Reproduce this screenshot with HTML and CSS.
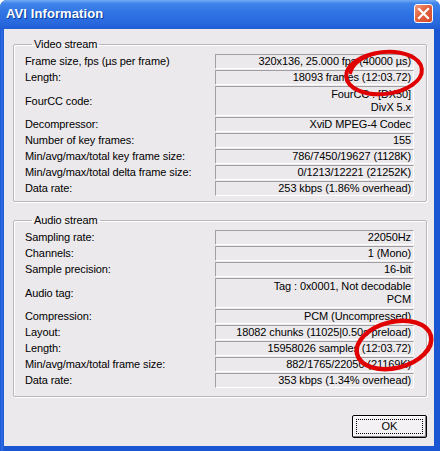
FILE: index.html
```html
<!DOCTYPE html>
<html>
<head>
<meta charset="utf-8">
<link rel="stylesheet" href="styles.css">
</head>
<body>
<div class="window">
  <div class="titlebar">
    <span class="title">AVI Information</span>
    <span class="close"><svg width="13" height="13" viewBox="0 0 13 13"><path d="M2 2 L11 11 M11 2 L2 11" stroke="#fff" stroke-width="2.2" stroke-linecap="square"/></svg></span>
  </div>
  <div class="frame">
    <div class="client">
      <fieldset class="group">
        <legend>Video stream</legend>
        <div class="rows">
          <div class="label">Frame size, fps (µs per frame)</div><div class="val">320x136, 25.000 fps (40000 µs)</div>
          <div class="label">Length:</div><div class="val">18093 frames (12:03.72)</div>
          <div class="label">FourCC code:</div><div class="val two">FourCC : [DX50]<br>DivX 5.x</div>
          <div class="label">Decompressor:</div><div class="val">XviD MPEG-4 Codec</div>
          <div class="label">Number of key frames:</div><div class="val">155</div>
          <div class="label">Min/avg/max/total key frame size:</div><div class="val">786/7450/19627 (1128K)</div>
          <div class="label">Min/avg/max/total delta frame size:</div><div class="val">0/1213/12221 (21252K)</div>
          <div class="label">Data rate:</div><div class="val">253 kbps (1.86% overhead)</div>
        </div>
      </fieldset>
      <fieldset class="group audio">
        <legend>Audio stream</legend>
        <div class="rows">
          <div class="label">Sampling rate:</div><div class="val">22050Hz</div>
          <div class="label">Channels:</div><div class="val">1 (Mono)</div>
          <div class="label">Sample precision:</div><div class="val">16-bit</div>
          <div class="label">Audio tag:</div><div class="val two">Tag : 0x0001, Not decodable<br>PCM</div>
          <div class="label">Compression:</div><div class="val">PCM (Uncompressed)</div>
          <div class="label">Layout:</div><div class="val">18082 chunks (11025|0.50s preload)</div>
          <div class="label">Length:</div><div class="val">15958026 samples (12:03.72)</div>
          <div class="label">Min/avg/max/total frame size:</div><div class="val">882/1765/22050 (21169K)</div>
          <div class="label">Data rate:</div><div class="val">353 kbps (1.34% overhead)</div>
        </div>
      </fieldset>
      <div class="buttons"><button class="ok"><span class="focus">OK</span></button></div>
    </div>
  </div>
  <svg class="marks" width="440" height="451" viewBox="0 0 440 451">
    <ellipse cx="384" cy="73" rx="38" ry="21" transform="rotate(-6 384 73)" fill="none" stroke="#e00000" stroke-width="4"/>
    <path d="M350 74 Q354 58 378 53" fill="none" stroke="#e00000" stroke-width="3.5"/>
    <ellipse cx="394" cy="345" rx="38" ry="23" transform="rotate(-14 394 345)" fill="none" stroke="#e00000" stroke-width="4.5"/>
  </svg>
</div>
</body>
</html>
```

FILE: styles.css
```css
* { box-sizing: border-box; }
html, body { margin: 0; padding: 0; }
body {
  width: 440px;
  height: 451px;
  overflow: hidden;
  background: #ffffff;
  font-family: "Liberation Sans", Arial, sans-serif;
}
.window {
  position: relative;
  width: 440px;
  height: 451px;
  display: flex;
  flex-direction: column;
  background: #1e5bd6;
  border-radius: 7px 7px 0 0;
  overflow: hidden;
}
.titlebar {
  height: 29px;
  flex: none;
  display: flex;
  align-items: center;
  justify-content: space-between;
  padding: 0 7px 2px 6px;
  background: linear-gradient(to bottom, #74acf4 0%, #3f84ea 12%, #2f73e4 45%, #2869de 80%, #1f5cd2 100%);
}
.title {
  color: #fff;
  font-weight: bold;
  font-size: 13px;
  letter-spacing: 0.1px;
  text-shadow: 1px 1px 0 #0b3a9a;
}
.close {
  width: 19px;
  height: 19px;
  border: 1px solid #fff;
  border-radius: 3px;
  background: linear-gradient(135deg, #f39a7a 0%, #e4613f 45%, #d24a2a 100%);
  display: flex;
  align-items: center;
  justify-content: center;
}
.frame {
  flex: 1;
  display: flex;
  padding: 0 6px 5px 4px;
  background: linear-gradient(to right, #1a55d2 0, #2f6fe4 2px, #1a55d2 4px);
}
.client {
  flex: 1;
  background: #ece9ec;
  display: flex;
  flex-direction: column;
  padding: 9px 7px 8px 9px;
  font-size: 11px;
  letter-spacing: -0.1px;
  color: #000;
}
.group {
  margin: 0;
  padding: 3px 12px 5px 11px;
  border: 1px solid #b9b6bc;
  border-radius: 2px;
  box-shadow: inset 1px 1px 0 #fff, 1px 1px 0 #fff;
}
.group.audio {
  margin-top: 12px;
  padding-bottom: 8px;
}
legend {
  margin-left: 7px;
  padding: 0 2px;
  line-height: 13px;
}
.rows {
  display: grid;
  grid-template-columns: 1fr 199px;
  row-gap: 1px;
  line-height: 13px;
}
.label {
  display: flex;
  align-items: center;
  white-space: nowrap;
}
.val {
  height: 15px;
  text-align: right;
  padding: 0 2px 0 2px;
  border-top: 1px solid #a19ea4;
  border-left: 1px solid #a19ea4;
  border-bottom: 1px solid #fff;
  border-right: 1px solid #fff;
  white-space: nowrap;
}
.val.two {
  height: 30px;
  padding-top: 1px;
}
.buttons {
  margin-top: auto;
  display: flex;
  justify-content: flex-end;
}
.ok {
  width: 75px;
  height: 23px;
  padding: 3px;
  border: 1px solid #000;
  border-radius: 2px;
  background: #f3f1f3;
  box-shadow: inset -1px -1px 0 #808080, inset 1px 1px 0 #fff;
  font-family: "Liberation Sans", Arial, sans-serif;
  font-size: 11px;
  color: #000;
  display: flex;
}
.focus {
  flex: 1;
  border: 1px dotted #000;
  display: flex;
  align-items: center;
  justify-content: center;
  line-height: 13px;
}
.marks {
  position: absolute;
  left: 0;
  top: 0;
  pointer-events: none;
}
```
